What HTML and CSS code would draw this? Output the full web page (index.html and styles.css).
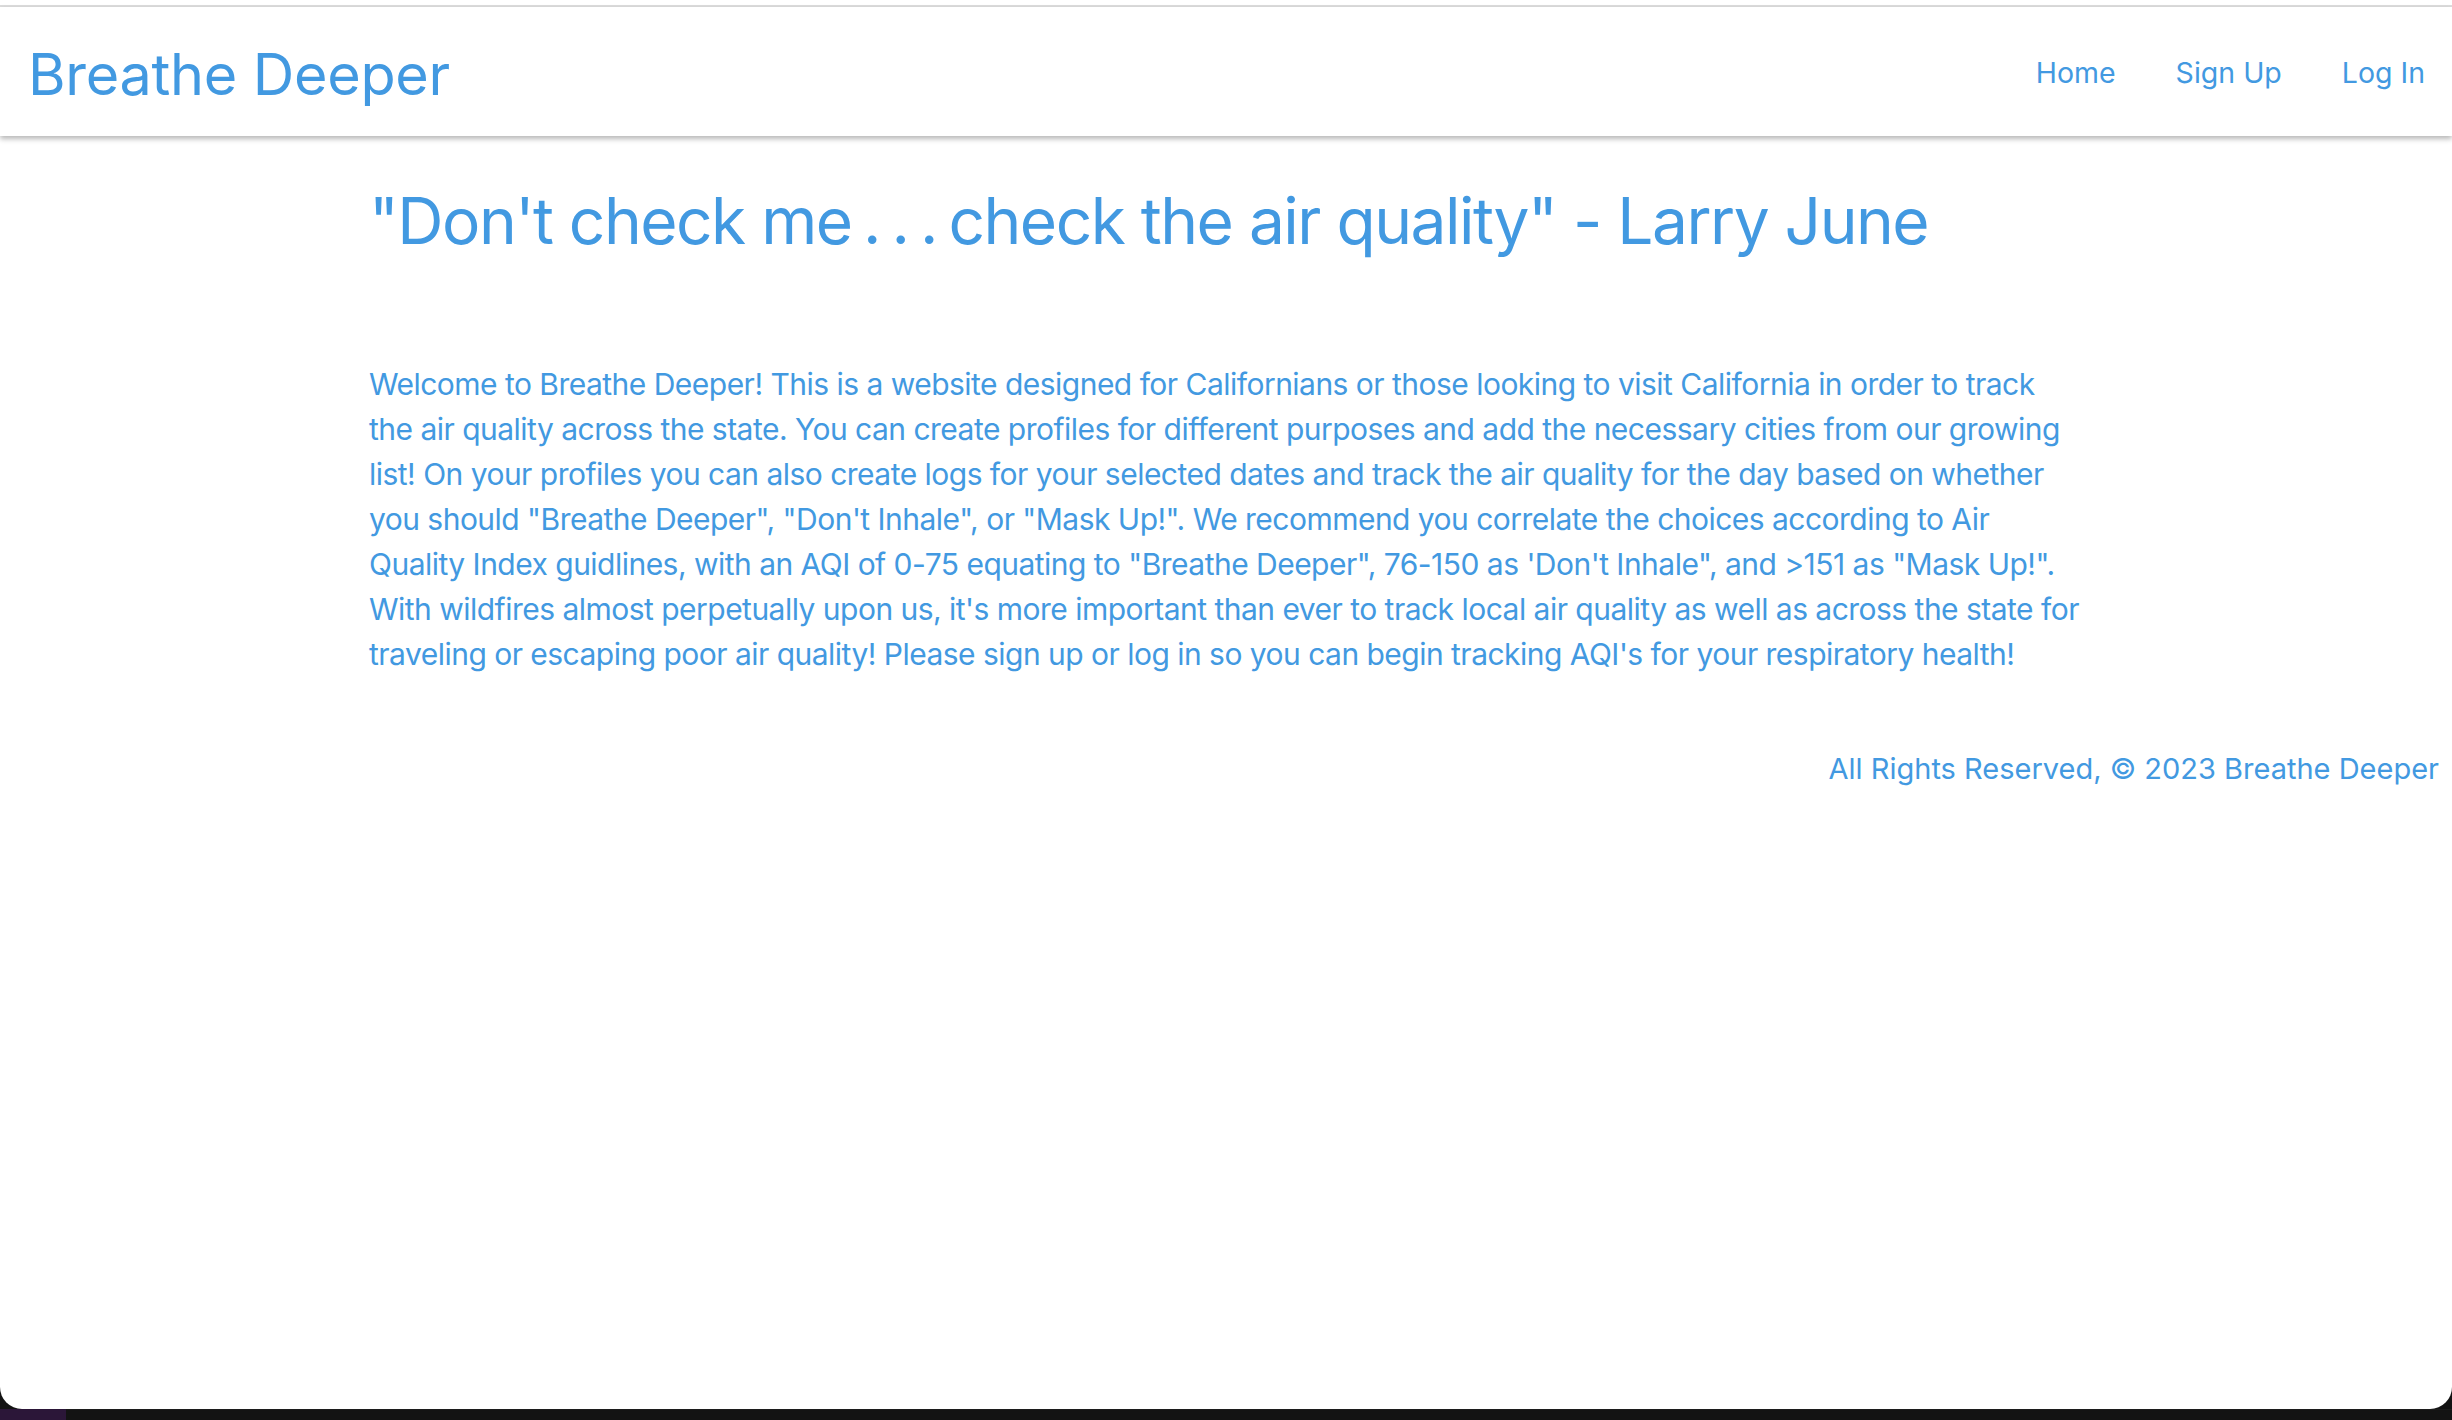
FILE: index.html
```html
<!DOCTYPE html>
<html lang="en">
<head>
<meta charset="utf-8">
<title>Breathe Deeper</title>
<link rel="stylesheet" href="styles.css">
</head>
<body>
<div class="window">
  <div class="topline"></div>
  <nav class="navbar">
    <a class="brand" href="#">Breathe Deeper</a>
    <ul class="nav-links">
      <li><a href="#">Home</a></li>
      <li><a href="#">Sign Up</a></li>
      <li><a href="#">Log In</a></li>
    </ul>
  </nav>
  <main class="content">
    <h1 class="quote">"Don't check me<span class="dots"> . . . </span>check the air quality" - Larry June</h1>
    <p class="intro">Welcome to Breathe Deeper! This is a website designed for Californians or those looking to visit California in order to track<br>
the air quality across the state. You can create profiles for different purposes and add the necessary cities from our growing<br>
list! On your profiles you can also create logs for your selected dates and track the air quality for the day based on whether<br>
you should "Breathe Deeper", "Don't Inhale", or "Mask Up!". We recommend you correlate the choices according to Air<br>
Quality Index guidlines, with an AQI of 0-75 equating to "Breathe Deeper", 76-150 as 'Don't Inhale", and &gt;151 as "Mask Up!".<br>
With wildfires almost perpetually upon us, it's more important than ever to track local air quality as well as across the state for<br>
traveling or escaping poor air quality! Please sign up or log in so you can begin tracking AQI's for your respiratory health!</p>
  </main>
  <footer class="footer">All Rights Reserved, © 2023 Breathe Deeper</footer>
</div>
<div class="dock-strip">
  <div class="dock-left"></div>
  <div class="dock-rest"></div>
</div>
</body>
</html>
```
FILE: styles.css
```css
* { box-sizing: border-box; }
html, body { margin: 0; padding: 0; }
body {
  background: #131313;
  font-family: Inter, "Noto Sans", "Liberation Sans", sans-serif;
  color: #4299e1;
  height: 1420px;
  overflow: hidden;
}
.window {
  height: 1409px;
  background: #fff;
  border-bottom-left-radius: 22px;
  border-bottom-right-radius: 22px;
  padding-top: 5px;
  display: flex;
  flex-direction: column;
}
.topline {
  height: 2px;
  background: #dcdcdc;
}
.navbar {
  height: 129px;
  display: flex;
  align-items: center;
  justify-content: space-between;
  padding: 0 27px 0 28px;
  background: #fff;
  box-shadow: 0 3px 5px rgba(0,0,0,0.28);
  position: relative;
  z-index: 1;
}
.brand {
  color: #4299e1;
  text-decoration: none;
  font-size: 57.5px;
  font-weight: 400;
  letter-spacing: -0.3px;
  margin-top: 5px;
}
.nav-links {
  list-style: none;
  margin: 0;
  padding: 0;
  display: flex;
  gap: 60px;
  margin-top: 2px;
}
.nav-links a {
  color: #4299e1;
  text-decoration: none;
  font-size: 28.5px;
}
.content {
  padding-left: 369px;
  padding-right: 40px;
}
.quote {
  margin: 47px 0 0;
  font-size: 64px;
  font-weight: 400;
  line-height: 1.2;
  letter-spacing: -1.5px;
}
.dots {
  word-spacing: -5px;
}
.intro {
  margin: 102px 0 0;
  font-size: 30px;
  line-height: 45px;
  letter-spacing: -0.52px;
  white-space: nowrap;
}
.footer {
  text-align: right;
  font-size: 29px;
  letter-spacing: 0;
  padding: 0 13px 0 0;
  margin-top: 74px;
}
.dock-strip {
  height: 11px;
  display: flex;
}
.dock-left {
  width: 66px;
  background: #2b1638;
}
.dock-rest {
  flex: 1;
  background: #131313;
  border-top: 1px solid #1c1c1c;
}
```
